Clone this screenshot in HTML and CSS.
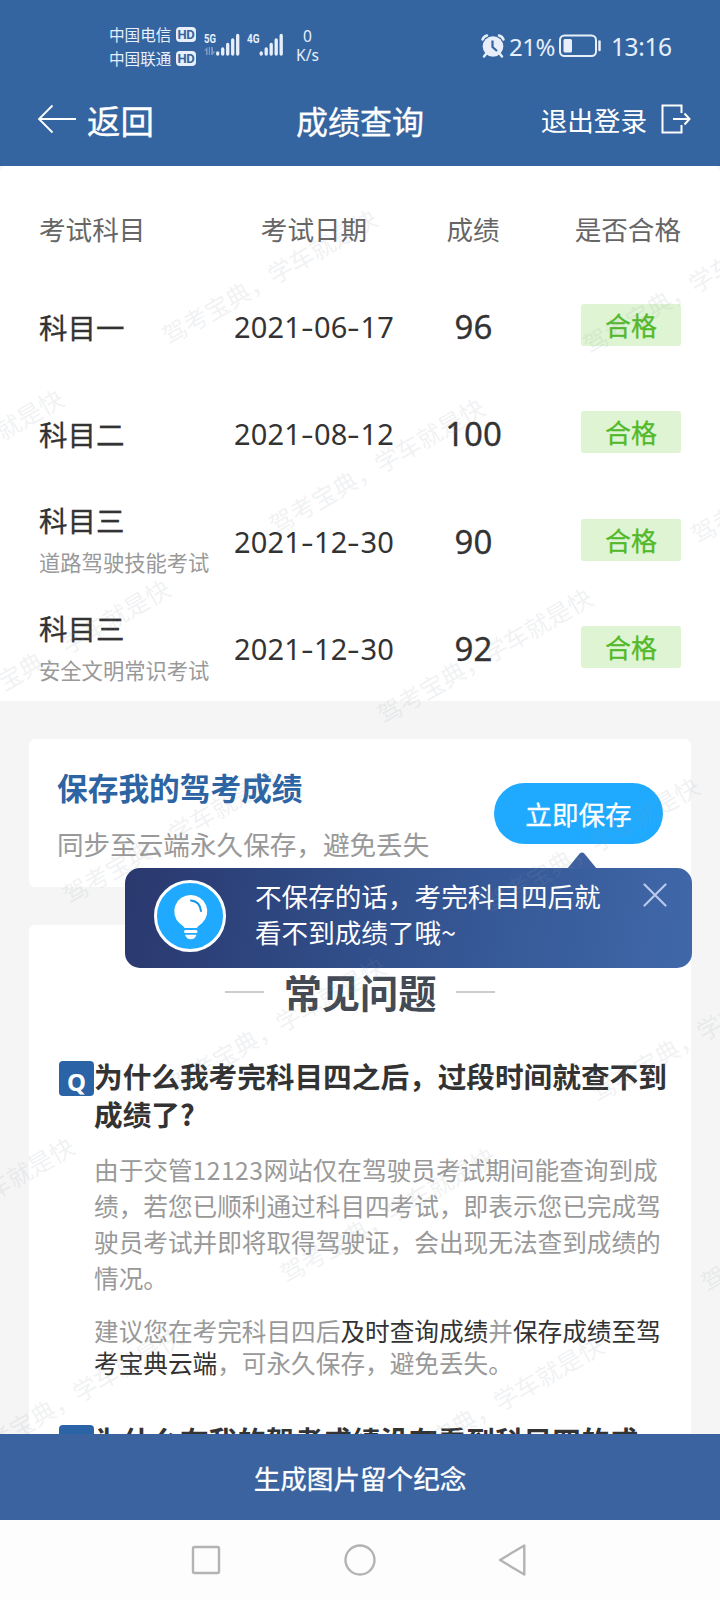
FILE: index.html
```html
<!DOCTYPE html>
<html lang="zh-CN">
<head>
<meta charset="utf-8">
<title>成绩查询</title>
<link rel="stylesheet" href="styles.css">
</head>
<body>
<div class="screen">
  <header class="top">
    <div class="status">
      <div class="carriers">
        <div class="carrier">中国电信<span class="hd">HD</span></div>
        <div class="carrier">中国联通<span class="hd">HD</span></div>
      </div>
      <svg class="signals" width="82" height="30" viewBox="0 0 82 30">
        <text class="net" x="0" y="14" textLength="12" lengthAdjust="spacingAndGlyphs">5G</text>
        <text class="net" x="43" y="14" textLength="12.5" lengthAdjust="spacingAndGlyphs">4G</text>
        <g class="dim"><path d="M3.500 26v-8L0 21.500h2V26zM4.800 18h1.200v8h-1.200zM7.200 18v8h1.300l2.700-3.500h-2.200v-4.500z"/></g>
        <g class="bars">
          <path d="M13.700 24v1M18.700 20v5M23.700 15.500v9.500M28.700 11v14M33.700 6.500v18.500"/>
          <path d="M57.200 24v1M62.200 20v5M67.200 15.500v9.500M72.200 11v14M77.200 6.500v18.500"/>
        </g>
      </svg>
      <div class="speed"><span>0</span><span>K/s</span></div>
      <div class="right">
        <svg class="alarm" width="26" height="26" viewBox="0 0 26 26">
          <circle cx="13" cy="13.500" r="10.300" fill="#e8effa"/>
          <path d="M2.500 6.500Q3.500 3.500 7 2.500M23.500 6.500Q22.500 3.500 19 2.500M6 21l-2 2.500M20 21l2 2.500" class="lightline"/>
          <path d="M12.500 7.500v6.500l4.500 4" fill="none" stroke="#3565a0" stroke-width="2.200"/>
        </svg>
        <span class="pct">21%</span>
        <svg class="battery" width="43" height="24" viewBox="0 0 43 24">
          <rect x="1" y="1.500" width="36" height="20.500" rx="4.500" fill="none" stroke="#e8effa" stroke-width="2"/>
          <rect x="4.500" y="5" width="8.500" height="13.500" rx="1.500" fill="#e8effa"/>
          <path d="M40.500 7.500v8.500" class="lightline"/>
        </svg>
        <span class="clock">13:16</span>
      </div>
    </div>
    <div class="nav">
      <div class="back">
        <svg width="40" height="30" viewBox="0 0 40 30"><path d="M39 15H2M15.500 1.500L2 15l13.500 13.500" fill="none" stroke="#fff" stroke-width="1.800"/></svg>
        <span>返回</span>
      </div>
      <h1 class="title">成绩查询</h1>
      <div class="logout">
        <span>退出登录</span>
        <svg width="30" height="30" viewBox="0 0 30 30"><path d="M20.500 9V1.500H1.500v27h19V21M12 15h16.500M23.500 9.500l5 5.500-5 5.500" fill="none" stroke="#fff" stroke-width="2"/></svg>
      </div>
    </div>
  </header>

  <main class="content">
    <section class="scores">
      <div class="row head"><span>考试科目</span><span>考试日期</span><span>成绩</span><span class="last">是否合格</span></div>
      <div class="row"><div class="subject"><b>科目一</b></div><span class="date">2021<i>-</i>06<i>-</i>17</span><span class="score">96</span><span class="badge">合格</span></div>
      <div class="row"><div class="subject"><b>科目二</b></div><span class="date">2021<i>-</i>08<i>-</i>12</span><span class="score">100</span><span class="badge">合格</span></div>
      <div class="row"><div class="subject"><b>科目三</b><small>道路驾驶技能考试</small></div><span class="date">2021<i>-</i>12<i>-</i>30</span><span class="score">90</span><span class="badge">合格</span></div>
      <div class="row"><div class="subject"><b>科目三</b><small>安全文明常识考试</small></div><span class="date">2021<i>-</i>12<i>-</i>30</span><span class="score">92</span><span class="badge">合格</span></div>
    </section>

    <section class="card save">
      <div class="save-text">
        <h2>保存我的驾考成绩</h2>
        <p>同步至云端永久保存，避免丢失</p>
      </div>
      <button class="save-btn">立即保存</button>
      <div class="tip">
        <svg class="tip-arrow" width="30" height="17" viewBox="0 0 30 17"><path d="M0 17L12.500 1.800Q15-.8 17.500 1.800L30 17z" fill="#3e60a0"/></svg>
        <svg class="bulb" width="72" height="72" viewBox="0 0 72 72">
          <circle cx="36" cy="36" r="34.500" fill="#1faaff" stroke="#fff" stroke-width="3"/>
          <path d="M36.500 15a16.300 16.300 0 0 0-11 28.300q4.500 3 5 4.700h12.500q.5-1.700 5-4.700a16.300 16.300 0 0 0-11.500-28.300z" fill="#fff"/>
          <path d="M37 20.500q9 1 10 10.500" fill="none" stroke="#1595e6" stroke-width="2" stroke-linecap="round"/>
          <path d="M31.500 50h10.500a1.300 1.300 0 0 1 0 3h-10.500a1.300 1.300 0 0 1 0-3zM31 54.800h11.500q-1.500 4.500-5.700 4.500t-5.800-4.500z" fill="#fff"/>
        </svg>
        <p>不保存的话，考完科目四后就<br>看不到成绩了哦~</p>
        <svg class="close" width="24" height="24" viewBox="0 0 24 24"><path d="M1.500 1.500l21 21M22.500 1.500l-21 21" fill="none" stroke="#b9c8ec" stroke-width="2.200" stroke-linecap="round"/></svg>
      </div>
    </section>

    <section class="card faq">
      <h2 class="faq-title">常见问题</h2>
      <article class="qa">
        <span class="q">Q</span>
        <div>
          <h3>为什么我考完科目四之后，过段时间就查不到<br>成绩了?</h3>
          <p>由于交管<span class="num">12123</span>网站仅在驾驶员考试期间能查询到成<br>绩，若您已顺利通过科目四考试，即表示您已完成驾<br>驶员考试并即将取得驾驶证，会出现无法查到成绩的<br>情况。</p>
          <p class="advice">建议您在考完科目四后<em>及时查询成绩</em>并<em>保存成绩至驾<br>考宝典云端</em>，可永久保存，避免丢失。</p>
        </div>
      </article>
      <article class="qa">
        <span class="q">Q</span>
        <div><h3>为什么在我的驾考成绩没有看到科目四的成</h3></div>
      </article>
    </section>

    <svg class="watermark" width="720" height="1268" viewBox="0 166 720 1268">
      <g>
        <text transform="translate(269 276) rotate(-30)">驾考宝典，学车就是快</text>
        <text transform="translate(690 285) rotate(-30)">驾考宝典，学车就是快</text>
        <text transform="translate(-45 456) rotate(-30)">驾考宝典，学车就是快</text>
        <text transform="translate(376 465) rotate(-30)">驾考宝典，学车就是快</text>
        <text transform="translate(798 475) rotate(-30)">驾考宝典，学车就是快</text>
        <text transform="translate(62 646) rotate(-30)">驾考宝典，学车就是快</text>
        <text transform="translate(484 655) rotate(-30)">驾考宝典，学车就是快</text>
        <text transform="translate(170 835) rotate(-30)">驾考宝典，学车就是快</text>
        <text transform="translate(591 844) rotate(-30)">驾考宝典，学车就是快</text>
        <text transform="translate(277 1024) rotate(-30)">驾考宝典，学车就是快</text>
        <text transform="translate(698 1033) rotate(-30)">驾考宝典，学车就是快</text>
        <text transform="translate(-34 1204) rotate(-30)">驾考宝典，学车就是快</text>
        <text transform="translate(387 1214) rotate(-30)">驾考宝典，学车就是快</text>
        <text transform="translate(808 1223) rotate(-30)">驾考宝典，学车就是快</text>
        <text transform="translate(74 1394) rotate(-30)">驾考宝典，学车就是快</text>
        <text transform="translate(495 1403) rotate(-30)">驾考宝典，学车就是快</text>
      </g>
    </svg>
  </main>

  <div class="generate">生成图片留个纪念</div>
  <footer class="sysnav">
    <svg width="720" height="80" viewBox="0 0 720 80">
      <g fill="none" stroke="#b3b3b3" stroke-width="2.400" stroke-linejoin="round">
        <rect x="193" y="27" width="26" height="26" rx="1.500"/>
        <circle cx="360" cy="40" r="14.500"/>
        <path d="M524.300 25.500v29L500 40z"/>
      </g>
    </svg>
  </footer>
</div>
</body>
</html>
```
FILE: styles.css
```css
* { box-sizing: border-box; margin: 0; padding: 0; }
body { font-family: "Noto Sans CJK SC", "Noto Sans", sans-serif; background: #f5f5f5; color: #333; }
svg { display: block; flex: none; }
.screen { width: 720px; height: 1600px; display: flex; flex-direction: column; overflow: hidden; white-space: nowrap; }

.top { height: 166px; flex: none; background: #3565a0; color: #fff; }
.status { height: 88px; padding: 22px 49px 0 109px; display: flex; align-items: flex-start; color: #e8effa; font-family: "Noto Sans", "Noto Sans CJK SC", sans-serif; }
.carriers { width: 95px; padding-top: 1px; }
.carrier { height: 23.500px; line-height: 23.500px; font-size: 15.600px; display: flex; align-items: center; gap: 4.500px; font-family: "Noto Sans CJK SC", sans-serif; }
.hd { width: 20px; height: 15px; border-radius: 4px; background: #e8effa; color: #3565a0; font: bold 13px/15px Roboto, sans-serif; text-align: center; letter-spacing: -.3px; }
.signals { margin-top: 7px; }
.net { font: bold 13.500px Roboto, sans-serif; fill: #e8effa; }
.dim { fill: #7d9bc6; }
.bars { stroke: #e8effa; stroke-width: 3.300; stroke-linecap: round; }
.speed { width: 43px; display: flex; flex-direction: column; align-items: center; font-size: 15.500px; line-height: 19px; padding-top: 5px; }
.right { margin-left: auto; display: flex; align-items: center; height: 48px; font-size: 24.500px; }
.lightline { fill: none; stroke: #e8effa; stroke-width: 2.500; stroke-linecap: round; }
.pct { margin-left: 3px; width: 47px; letter-spacing: -.5px; font-size: 24px; }
.battery { margin-left: 3px; }
.clock { width: 60px; margin-left: 9px; font-size: 24.500px; letter-spacing: -.4px; }

.nav { height: 62px; padding: 2px 29px 0 37px; display: grid; grid-template-columns: 1fr auto 1fr; align-items: center; }
.nav svg { margin-top: -2px; }
.back { display: flex; align-items: center; gap: 10px; font-size: 33.500px; line-height: 60px; }
.title { font-size: 32px; font-weight: 400; line-height: 60px; margin-left: -8px; }
.logout { display: flex; align-items: center; justify-content: flex-end; gap: 14px; font-size: 26.600px; line-height: 60px; }
.back, .title { -webkit-text-stroke: .3px #fff; }

.content { position: relative; flex: 1; overflow: hidden; background: #f5f5f5; }
.scores { height: 535px; background: #fff; border-radius: 6px 6px 0 0; padding: 0 39px; }
.row { display: grid; grid-template-columns: 186px 178px 140px 1fr; align-items: center; height: 107.300px; justify-items: center; }
.row > :first-child { justify-self: start; }
.row > :last-child { justify-self: end; }
.head { height: 105.500px; padding-top: 20px; font-size: 26.600px; color: #666; }
.subject { display: flex; flex-direction: column; padding-top: 3px; }
.subject b { font-size: 28.500px; line-height: 42px; font-weight: 400; -webkit-text-stroke: .3px #333; }
.subject small { font-size: 21.300px; line-height: 42px; color: #999; }
.date, .score { font-family: "Noto Sans", sans-serif; padding-top: 3px; }
.date { font-size: 29px; letter-spacing: .15px; }
.date i { font-style: normal; display: inline-block; width: 13px; text-align: center; transform: scaleX(1.350); }
.score { font-size: 33px; padding-left: 1px; -webkit-text-stroke: .3px #333; }
.badge { width: 100px; height: 42px; line-height: 42px; border-radius: 3px; background: #def4d2; color: #52b92a; text-align: center; font-size: 26px; -webkit-text-stroke: .3px #52b92a; }

.card { margin: 38px 29px 0; background: #fff; border-radius: 6px; }
.save { position: relative; height: 148px; padding: 0 28px 0 28px; display: flex; justify-content: space-between; align-items: flex-start; }
.save h2 { margin-top: 25px; font-size: 30.700px; line-height: 46px; color: #2d64a3; }
.save p { font-size: 26.600px; line-height: 40px; }
.save-text p { margin-top: 14px; color: #999; }
.save-btn { margin-top: 44px; width: 169px; height: 61px; border: 0; border-radius: 31px; background: #1faaff; color: #fff; font: 26.600px/58px "Noto Sans CJK SC", sans-serif; -webkit-text-stroke: .3px #fff; }
.tip { position: absolute; left: 96px; top: 129px; width: 566.500px; height: 100px; border-radius: 15px; background: linear-gradient(100deg, #2a386d, #31508c 45%, #4068a9); display: flex; align-items: flex-start; padding: 12px 24px 0 29px; z-index: 1; color: #fff; }
.tip-arrow { position: absolute; left: 442px; top: -16px; }
.tip .bulb { margin-top: 0; }
.save .tip p { margin-left: 29px; line-height: 35.500px; margin-top: -2px; }
.close { margin: 3px 1px 0 auto; }

.faq { height: 800px; padding: 44px 20px 0 30px; }
.faq-title { display: flex; justify-content: center; align-items: center; gap: 20px; font-size: 38.200px; line-height: 46px; color: #444a54; padding-right: 10px; }
.faq-title::before, .faq-title::after { content: ""; width: 39px; height: 2px; background: #ccc; }
.qa { display: flex; margin-top: 46px; }
.q { width: 35px; height: 35px; flex: none; border-radius: 4px; background: #2a63a6; color: #fff; font: bold 24px/35px "Noto Sans", sans-serif; text-align: center; padding-top: 3px; }
.qa h3 { font-size: 28.650px; line-height: 38px; margin-top: -4px; }
.qa p { font-size: 24.650px; line-height: 36px; color: #999; margin-top: 17.500px; }
.num { letter-spacing: .5px; }
.qa .advice { line-height: 32.500px; margin-top: 19px; }
.qa em { font-style: normal; color: #333; }

.watermark { position: absolute; left: 0; top: 0; z-index: 2; pointer-events: none; }
.watermark text { font-size: 24.400px; text-anchor: middle; dominant-baseline: central; fill: #8c98a5; fill-opacity: .15; }

.generate { height: 86px; flex: none; background: #3a63a0; color: #fff; text-align: center; font-size: 26.600px; line-height: 87px; -webkit-text-stroke: .3px #fff; }
.sysnav { height: 80px; flex: none; background: #fdfdfd; }
```
